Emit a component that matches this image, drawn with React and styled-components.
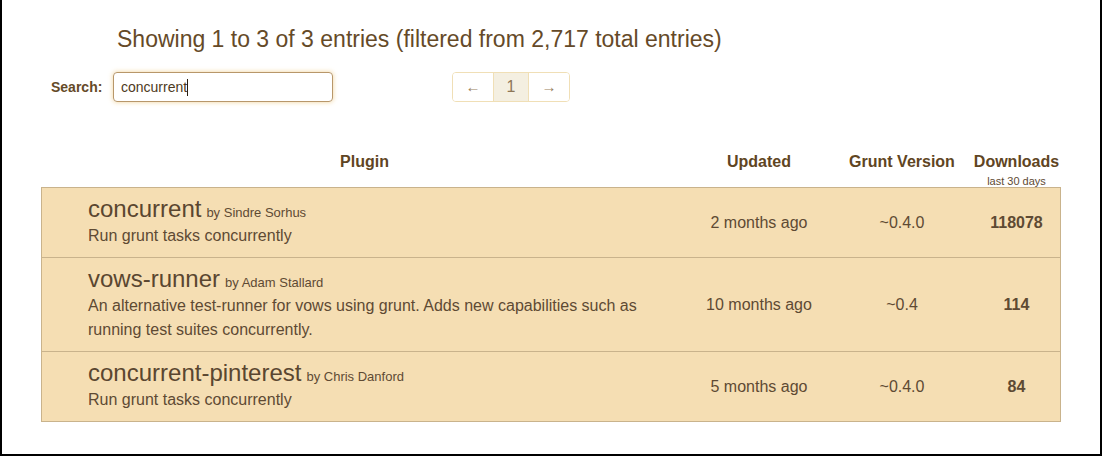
import React from 'react'
import styled, { createGlobalStyle } from 'styled-components'

const GlobalStyle = createGlobalStyle`
  html, body {
    margin: 0;
    padding: 0;
    background: #fff;
  }
  body {
    font-family: 'Liberation Sans', Arial, sans-serif;
  }
`

const plugins = [
  {
    name: 'concurrent',
    author: 'Sindre Sorhus',
    description: 'Run grunt tasks concurrently',
    updated: '2 months ago',
    grunt: '~0.4.0',
    downloads: 118078,
  },
  {
    name: 'vows-runner',
    author: 'Adam Stallard',
    description:
      'An alternative test-runner for vows using grunt. Adds new capabilities such as running test suites concurrently.',
    updated: '10 months ago',
    grunt: '~0.4',
    downloads: 114,
  },
  {
    name: 'concurrent-pinterest',
    author: 'Chris Danford',
    description: 'Run grunt tasks concurrently',
    updated: '5 months ago',
    grunt: '~0.4.0',
    downloads: 84,
  },
]

const App = () => (
  <>
    <GlobalStyle />
    <Frame>
      <Info>Showing 1 to 3 of 3 entries (filtered from 2,717 total entries)</Info>

      <Toolbar>
        <SearchLabel>Search:</SearchLabel>
        <SearchBox>
          concurrent
          <Caret />
        </SearchBox>
        <Pager>
          <PageCell>&larr;</PageCell>
          <PageCell active>1</PageCell>
          <PageCell>&rarr;</PageCell>
        </Pager>
      </Toolbar>

      <Table>
        <HeadRow>
          <HeadCell>Plugin</HeadCell>
          <HeadCell>Updated</HeadCell>
          <HeadCell>Grunt Version</HeadCell>
          <HeadCell>
            Downloads
            <HeadNote>last 30 days</HeadNote>
          </HeadCell>
        </HeadRow>
        <Body>
          {plugins.map((p) => (
            <Row key={p.name}>
              <PluginCell>
                <NameLine>
                  {p.name}
                  <Author>by {p.author}</Author>
                </NameLine>
                <Description>{p.description}</Description>
              </PluginCell>
              <Cell>{p.updated}</Cell>
              <Cell>{p.grunt}</Cell>
              <Cell bold>{p.downloads}</Cell>
            </Row>
          ))}
        </Body>
      </Table>
    </Frame>
  </>
)

export default App

const Frame = styled.div`
  box-sizing: border-box;
  width: 1102px;
  height: 456px;
  border-left: 2px solid #000;
  border-right: 2px solid #000;
  border-bottom: 2px solid #000;
  padding-top: 25px;
  color: #5e4a33;
`

const Info = styled.div`
  padding-left: 115px;
  font-size: 23px;
  line-height: 28px;
  color: #654a28;
`

const Toolbar = styled.div`
  display: flex;
  align-items: center;
  height: 30px;
  margin-top: 19px;
  padding-left: 49px;
`

const SearchLabel = styled.span`
  font-size: 14px;
  font-weight: bold;
  color: #654a28;
  width: 62px;
`

const SearchBox = styled.div`
  box-sizing: border-box;
  display: flex;
  align-items: center;
  width: 220px;
  height: 30px;
  padding-left: 7px;
  border: 1px solid #b8976a;
  border-radius: 4px;
  box-shadow: 0 0 5px rgba(236, 196, 120, 0.75);
  font-size: 14px;
  color: #4e3a22;
`

const Caret = styled.span`
  display: inline-block;
  width: 1px;
  height: 17px;
  background: #2a1e10;
`

const Pager = styled.div`
  display: flex;
  height: 30px;
  margin-left: 119px;
  border: 1px solid #f0dfb6;
  border-radius: 4px;
  overflow: hidden;
  box-sizing: border-box;
`

const PageCell = styled.div`
  display: flex;
  align-items: center;
  justify-content: center;
  width: ${(p) => (p.active ? '34px' : '40px')};
  padding-bottom: ${(p) => (p.active ? '0' : '2px')};
  border-left: 1px solid #f0dfb6;
  background: ${(p) => (p.active ? '#f4efe1' : '#fff')};
  color: ${(p) => (p.active ? '#8e7656' : '#9a8260')};
  font-size: ${(p) => (p.active ? '16px' : '15px')};

  &:first-child {
    border-left: none;
  }
`

const Table = styled.div`
  margin: 50px 0 0 39px;
  width: 1020px;
`

const columns = '645px 144px 142px 87px'

const HeadRow = styled.div`
  display: grid;
  grid-template-columns: ${columns};
  border: 1px solid transparent;
  border-bottom: none;
  height: 34px;
`

const HeadCell = styled.div`
  display: flex;
  flex-direction: column;
  align-items: center;
  font-size: 16px;
  font-weight: bold;
  line-height: 18px;
  color: #5f4523;
`

const HeadNote = styled.span`
  margin-top: 3px;
  font-size: 11px;
  font-weight: normal;
  line-height: 14px;
  color: #5e4a33;
`

const Body = styled.div`
  border: 1px solid #c9b38c;
  background: #f5deb3;
`

const Row = styled.div`
  display: grid;
  grid-template-columns: ${columns};
  border-top: 1px solid #c9b38c;

  &:first-child {
    border-top: none;
  }
`

const PluginCell = styled.div`
  padding: 6px 8px 9px 46px;
`

const NameLine = styled.div`
  height: 30px;
  font-size: 24px;
  line-height: 30px;
  color: #5a4630;
`

const Author = styled.span`
  margin-left: 5px;
  font-size: 13px;
  line-height: 1;
  color: #5e4a33;
`

const Description = styled.div`
  font-size: 16px;
  line-height: 24px;
  color: #5e4a33;
`

const Cell = styled.div`
  display: flex;
  align-items: center;
  justify-content: center;
  font-size: 16px;
  font-weight: ${(p) => (p.bold ? 'bold' : 'normal')};
  color: #5e4a33;
`
